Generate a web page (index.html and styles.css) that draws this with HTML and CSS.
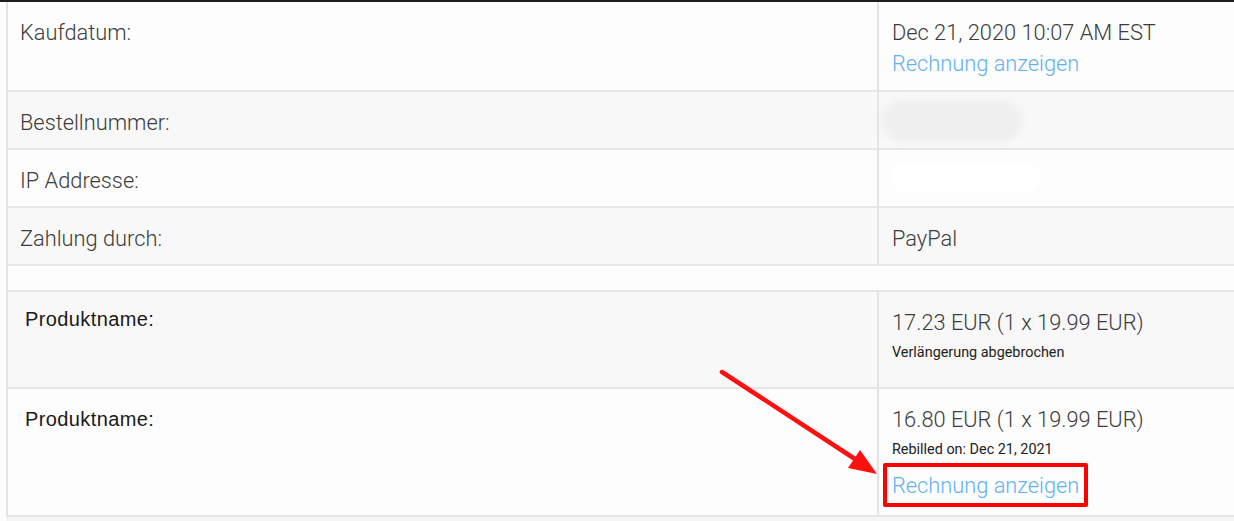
FILE: index.html
```html
<!DOCTYPE html>
<html lang="en">
<head>
    <meta charset="UTF-8">
    <meta name="viewport" content="width=device-width, initial-scale=1.0">
    <title>Bestelldetails</title>
    <link rel="stylesheet" href="styles.css">
</head>
<body>
<div class="page">
    <div class="details">
        <div class="row row-white row-date">
            <div class="label">Kaufdatum:</div>
            <div class="value">
                Dec 21, 2020 10:07 AM EST<br>
                <a href="#" class="invoice">Rechnung anzeigen</a>
            </div>
        </div>
        <div class="row row-gray">
            <div class="label">Bestellnummer:</div>
            <div class="value"><span class="blur blur-gray"></span></div>
        </div>
        <div class="row row-white">
            <div class="label">IP Addresse:</div>
            <div class="value"><span class="blur blur-white"></span></div>
        </div>
        <div class="row row-gray">
            <div class="label">Zahlung durch:</div>
            <div class="value">PayPal</div>
        </div>
        <div class="row row-white row-spacer"></div>
        <div class="row row-gray row-product">
            <div class="label product-label">Produktname:</div>
            <div class="value">
                17.23 EUR (1 x 19.99 EUR)
                <div class="note">Verlängerung abgebrochen</div>
            </div>
        </div>
        <div class="row row-white row-product2">
            <div class="label product-label">Produktname:</div>
            <div class="value">
                16.80 EUR (1 x 19.99 EUR)
                <div class="note">Rebilled on: Dec 21, 2021</div>
                <span class="highlight"><a href="#" class="invoice">Rechnung anzeigen</a></span>
            </div>
        </div>
    </div>

    <!-- annotation arrow -->
    <svg class="arrow" width="1234" height="521" viewBox="0 0 1234 521">
        <line x1="722" y1="372" x2="858" y2="461" stroke="#ff1010" stroke-width="4.5" stroke-linecap="round"/>
        <polygon points="877,474 848,468 860,450" fill="#ff1010"/>
    </svg>
</div>
</body>
</html>
```

FILE: styles.css
```css
body {
    margin: 0;
    padding: 0;
    background-color: #f5f5f5;
    overflow: hidden;
    font-family: Roboto, "Liberation Sans", Arial, sans-serif;
}

.page {
    position: relative;
    width: 1234px;
    height: 521px;
    border-top: 2px solid #1e1e1e;
    box-sizing: border-box;
    background: linear-gradient(to right, #fdfdfd 6px, transparent 6px);
}

.details {
    margin-left: 6px;
    width: 1260px;
    border-left: 2px solid #e4e4e4;
}

.row {
    display: grid;
    grid-template-columns: 871px 1fr;
    border-bottom: 2px solid #e6e6e6;
    box-sizing: border-box;
    height: 58px;
}

.row-white {
    background-color: #fdfdfd;
}

.row-gray {
    background-color: #f8f8f8;
}

.row-date {
    height: 90px;
}

.row-spacer {
    height: 26px;
    display: block;
}

.row-product {
    height: 97px;
}

.row-product2 {
    height: 128px;
}

.label, .value {
    padding: 15px 0 0 12px;
    font-size: 21.8px;
    font-weight: 300;
    line-height: 31px;
    color: #3c3c3c;
}

.label {
    border-right: 2px solid #e4e4e4;
}

.value {
    position: relative;
    padding-left: 13px;
}

.product-label {
    padding: 15px 0 0 17px;
    font-family: "Liberation Sans", Arial, sans-serif;
    font-weight: 400;
    font-size: 20px;
    letter-spacing: 0.4px;
    color: #1a1a1a;
}

.row-product .product-label {
    padding-top: 12px;
}

.invoice {
    color: #64b1f2;
    text-decoration: none;
}

.note {
    font-size: 14.4px;
    font-weight: 400;
    color: #222;
    line-height: 22px;
    margin-top: 4px;
}

.highlight {
    display: inline-block;
    margin: 2px 0 0 -9px;
    padding: 0 5px;
    height: 36px;
    line-height: 38px;
    border: 4px solid #ff0000;
    border-radius: 2px;
}

.blur {
    position: absolute;
    display: block;
    border-radius: 30px;
    filter: blur(3px);
}

.blur-gray {
    left: 3px;
    top: 8px;
    width: 140px;
    height: 42px;
    background-color: #efefef;
}

.blur-white {
    left: 10px;
    top: 12px;
    width: 152px;
    height: 30px;
    background-color: #ffffff;
}

.arrow {
    position: absolute;
    left: 0;
    top: -2px;
    pointer-events: none;
}
```
